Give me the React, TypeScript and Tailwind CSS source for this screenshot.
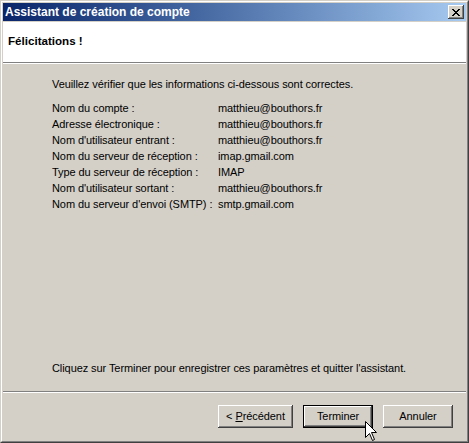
import React from "react";

const rows: [string, string][] = [
  ["Nom du compte :", "matthieu@bouthors.fr"],
  ["Adresse électronique :", "matthieu@bouthors.fr"],
  ["Nom d'utilisateur entrant :", "matthieu@bouthors.fr"],
  ["Nom du serveur de réception :", "imap.gmail.com"],
  ["Type du serveur de réception :", "IMAP"],
  ["Nom d'utilisateur sortant :", "matthieu@bouthors.fr"],
  ["Nom du serveur d'envoi (SMTP) :", "smtp.gmail.com"],
];

const bevel =
  "shadow-[inset_-1px_-1px_#404040,inset_1px_1px_#ffffff,inset_-2px_-2px_#808080,inset_2px_2px_#d4d0c8]";

function WinButton({
  children,
  width,
  isDefault,
}: {
  children: React.ReactNode;
  width: string;
  isDefault?: boolean;
}) {
  return (
    <button
      className={`${width} h-[23px] flex items-center justify-center bg-[#d4d0c8] text-[11px] leading-none tracking-[-0.08px] text-black ${bevel} ${
        isDefault ? "border border-black" : ""
      }`}
    >
      <span>{children}</span>
    </button>
  );
}

export default function App() {
  return (
    <div
      className="relative w-[469px] h-[443px] overflow-hidden bg-[#d4d0c8] text-black"
      style={{ fontFamily: '"Liberation Sans", Arial, sans-serif' }}
    >
      <div className="w-full h-full border border-t-[#d4d0c8] border-l-[#d4d0c8] border-r-[#404040] border-b-[#404040]">
        <div className="w-full h-full border border-t-white border-l-white border-r-[#808080] border-b-[#808080]">
          <div className="w-full h-full p-px flex flex-col bg-[#d4d0c8]">
            {/* title bar */}
            <div className="h-[18px] flex items-center justify-between bg-linear-to-r from-[#0a246a] to-[#a6caf0] pl-[2px] pr-[2px]">
              <span className="text-white font-bold text-[12px] leading-none">
                Assistant de création de compte
              </span>
              <div
                className={`w-[16px] h-[14px] bg-[#d4d0c8] flex items-center justify-center ${bevel}`}
              >
                <svg width="8" height="7" viewBox="0 0 8 7">
                  <path
                    d="M0 0h2v1h1v1h2V1h1V0h2v1H7v1H6v1H5v1h1v1h1v1h1v1H6V6H5V5H3v1H2v1H0V6h1V5h1V4h1V3H2V2H1V1H0z"
                    fill="#000"
                  />
                </svg>
              </div>
            </div>

            {/* header */}
            <div className="mt-px h-[40px] bg-white pl-[5px] pt-[6px]">
              <span className="font-bold text-[11.6px]">Félicitations !</span>
            </div>
            <div className="h-px bg-[#808080]" />
            <div className="h-px bg-white" />

            {/* body */}
            <div className="flex-1 flex flex-col justify-between pt-[12px] pb-[15px] pl-[49px] text-[11px] leading-[16px] tracking-[-0.08px]">
              <div>
                <p className="mb-[8px]">
                  Veuillez vérifier que les informations ci-dessous sont correctes.
                </p>
                <div className="grid grid-cols-[166px_1fr]">
                  {rows.map(([label, value]) => (
                    <React.Fragment key={label}>
                      <span>{label}</span>
                      <span>{value}</span>
                    </React.Fragment>
                  ))}
                </div>
              </div>
              <p>
                Cliquez sur Terminer pour enregistrer ces paramètres et quitter
                l'assistant.
              </p>
            </div>

            <div className="h-px bg-[#808080]" />
            <div className="h-px bg-white" />

            {/* buttons */}
            <div className="h-[47px] flex justify-end items-start gap-[10px] pt-[12px] pr-[13px]">
              <WinButton width="w-[75px]">
                &lt; <span className="underline">P</span>récédent
              </WinButton>
              <WinButton width="w-[70px]" isDefault>
                Terminer
              </WinButton>
              <WinButton width="w-[70px]">Annuler</WinButton>
            </div>
          </div>
        </div>
      </div>

      {/* mouse cursor */}
      <svg
        className="absolute left-[365px] top-[421px]"
        width="13"
        height="21"
        viewBox="0 0 13 21"
      >
        <path
          d="M0.5 0.5V16.5L4.5 12.5L7.5 19.5L9.5 18.5L6.5 11.5H11.5Z"
          fill="#fff"
          stroke="#000"
          strokeWidth="1"
        />
      </svg>
    </div>
  );
}
